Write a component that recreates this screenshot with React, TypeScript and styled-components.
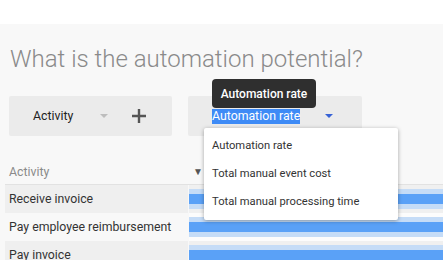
import styled, { createGlobalStyle } from "styled-components";

const GlobalStyle = createGlobalStyle`
  html, body {
    margin: 0;
    padding: 0;
    background: #f8f8f8;
    font-family: Roboto, "Liberation Sans", sans-serif;
    overflow: hidden;
  }
`

const TopBar = styled.div`
  height: 24px;
  background: #ffffff;
`

const Main = styled.div`
  background: #f8f8f8;
  padding-left: 5px;
`

const Title = styled.h1`
  margin: 0;
  padding: 20px 0 0 5px;
  height: 72px;
  box-sizing: border-box;
  font-size: 24px;
  font-weight: 300;
  line-height: 30px;
  color: #8a8a8a;
  white-space: nowrap;
`

const Controls = styled.div`
  display: flex;
  gap: 16px;
  padding-left: 4px;
`

const Picker = styled.div<{ $width: number }>`
  position: relative;
  width: ${(p) => p.$width}px;
  height: 40px;
  background: #ebebeb;
  border-radius: 2px;
  display: flex;
  align-items: center;
  padding-left: 24px;
  box-sizing: border-box;
  font-size: 12.3px;
  color: #222;
`

const PickerLabel = styled.span<{ $selected?: boolean }>`
  width: ${(p) => (p.$selected ? "113px" : "67px")};
  span {
    background: ${(p) => (p.$selected ? "#3e8bf6" : "transparent")};
    color: ${(p) => (p.$selected ? "#fff" : "#222")};
    line-height: 15px;
    display: inline-block;
  }
`

const Caret = styled.span<{ $color: string }>`
  width: 0;
  height: 0;
  border-left: 4px solid transparent;
  border-right: 4px solid transparent;
  border-top: 4px solid ${(p) => p.$color};
`

const AddButton = styled.span`
  margin-left: 24px;
  display: flex;
`

const Tooltip = styled.div`
  position: absolute;
  left: 24px;
  top: -17px;
  width: 104px;
  height: 29px;
  border-radius: 4px;
  background: #2f2f2f;
  color: #fff;
  font-size: 12px;
  font-weight: 500;
  display: flex;
  align-items: center;
  justify-content: center;
  z-index: 3;
`

const Menu = styled.ul`
  position: absolute;
  left: 16px;
  top: 32px;
  width: 194px;
  margin: 0;
  padding: 4px 0;
  list-style: none;
  background: #fff;
  border-radius: 2px;
  box-shadow: 0 1px 4px rgba(0, 0, 0, 0.35);
  z-index: 2;
`

const MenuItem = styled.li`
  height: 28px;
  line-height: 28px;
  padding-left: 8px;
  font-size: 11.2px;
  color: #333;
  white-space: nowrap;
`

const Table = styled.div`
  margin-top: 24px;
  display: grid;
  grid-template-columns: 184px 1fr;
`

const HeaderCell = styled.div`
  height: 24px;
  border-bottom: 1px solid #e2e2e2;
  display: flex;
  align-items: center;
  font-size: 12.3px;
  color: #8a8a8a;
  padding-left: 4px;
`

const SortMark = styled.span`
  font-size: 10px;
  color: #555;
  margin-top: -2px;
`

const NameCell = styled.div<{ $odd: boolean }>`
  height: 28px;
  line-height: 28px;
  padding-left: 4px;
  font-size: 12.3px;
  color: #333;
  background: ${(p) => (p.$odd ? "#efefef" : "#f8f8f8")};
  border-right: 1px solid #f8f8f8;
  white-space: nowrap;
`

const BarCell = styled.div<{ $odd: boolean }>`
  height: 28px;
  display: flex;
  align-items: center;
  background: ${(p) => (p.$odd ? "#f0f0f0" : "#fcfcfc")};
`

const Bar = styled.div`
  width: 100%;
  height: 10px;
  background: #5aa1f7;
  border-top: 5px solid #c5dcf7;
  border-bottom: 5px solid #c5dcf7;
`

const rows = ["Receive invoice", "Pay employee reimbursement", "Pay invoice"]

const App = () => {
  return (
    <>
      <GlobalStyle />
      <TopBar />
      <Main>
        <Title>What is the automation potential?</Title>
        <Controls>
          <Picker $width={163}>
            <PickerLabel><span>Activity</span></PickerLabel>
            <Caret $color="#bdbdbd" />
            <AddButton>
              <svg width="14" height="14" viewBox="0 0 14 14">
                <path d="M7 0v14M0 7h14" stroke="#555" strokeWidth="2.4" />
              </svg>
            </AddButton>
          </Picker>
          <Picker $width={174}>
            <Tooltip>Automation rate</Tooltip>
            <PickerLabel $selected><span>Automation rate</span></PickerLabel>
            <Caret $color="#3762d6" />
            <Menu>
              <MenuItem>Automation rate</MenuItem>
              <MenuItem>Total manual event cost</MenuItem>
              <MenuItem>Total manual processing time</MenuItem>
            </Menu>
          </Picker>
        </Controls>
        <Table>
          <HeaderCell>Activity</HeaderCell>
          <HeaderCell><SortMark>▼</SortMark></HeaderCell>
          {rows.map((name, i) => (
            <>
              <NameCell key={name} $odd={i % 2 === 0}>{name}</NameCell>
              <BarCell key={name + "-bar"} $odd={i % 2 === 0}><Bar /></BarCell>
            </>
          ))}
        </Table>
      </Main>
    </>
  )
}

export default App
